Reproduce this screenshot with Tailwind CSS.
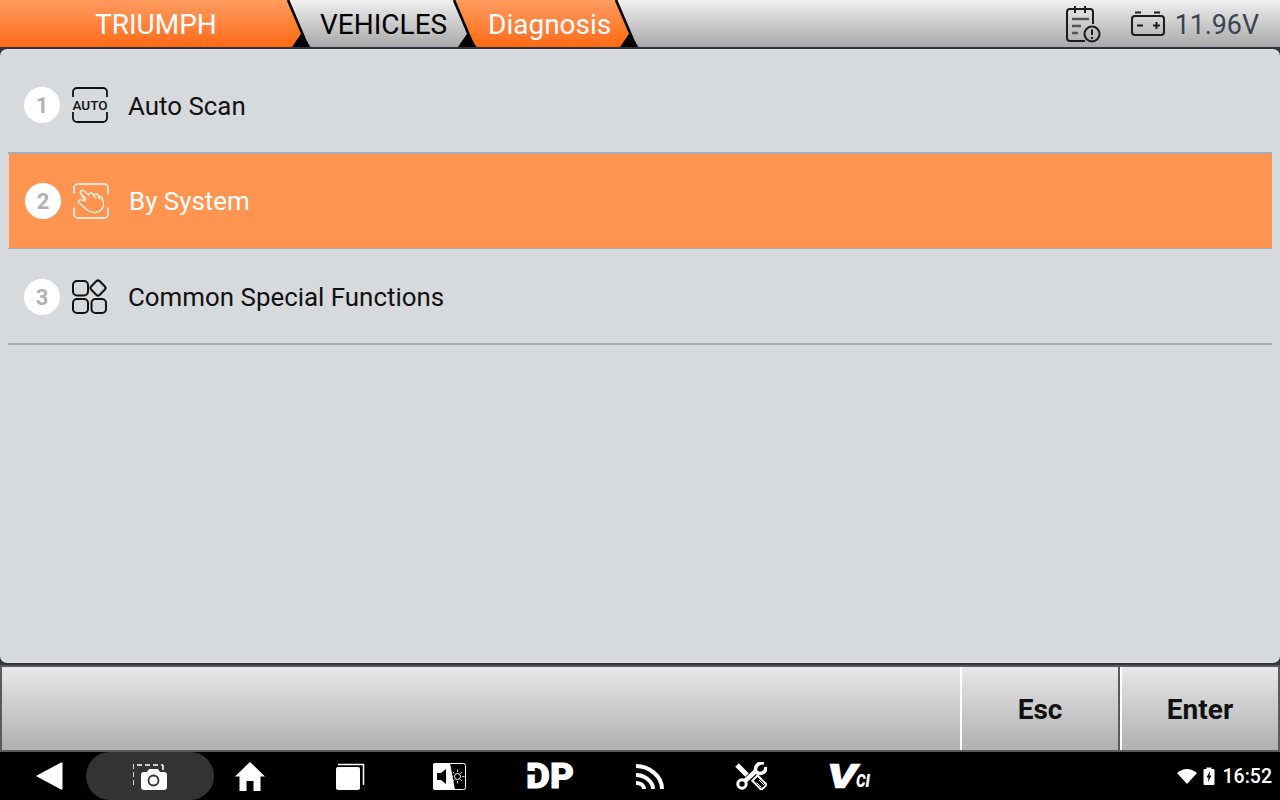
<!DOCTYPE html>
<html lang="en">
<head>
    <meta charset="UTF-8">
    <title>Diagnosis</title>
    <script src="https://cdn.jsdelivr.net/npm/@tailwindcss/browser@4"></script>
</head>
<body class="w-[1280px] h-[800px] overflow-hidden bg-[#2f3540] font-[Roboto,sans-serif]">

    <!-- Shared gradients for the breadcrumb separators -->
    <svg width="0" height="0" class="absolute">
        <defs>
            <linearGradient id="orangeGrad" x1="0" y1="0" x2="0" y2="1">
                <stop offset="0" stop-color="#ff9b5e"/>
                <stop offset="1" stop-color="#ff6a0c"/>
            </linearGradient>
        </defs>
    </svg>

    <!-- Top bar -->
    <header class="h-[47px] flex items-stretch bg-gradient-to-b from-[#f0f0f0] to-[#a9a9a9]">
        <div class="w-[287px] flex items-center pl-[95px] pt-[3px] bg-gradient-to-b from-[#ff9b5e] to-[#ff6a0c] text-white text-[28px]">TRIUMPH</div>
        <svg width="24" height="47" viewBox="0 0 24 47" class="shrink-0">
            <polygon points="0,0 1,0 15,33 6,47 0,47" fill="url(#orangeGrad)"/>
            <polygon points="14.5,33 23.5,47 5,47" fill="#000"/>
            <line x1="1" y1="0" x2="21" y2="47" stroke="#000" stroke-width="2.6"/>
        </svg>
        <div class="w-[142px] flex items-center pl-[9px] pt-[3px] text-black text-[28px]">VEHICLES</div>
        <svg width="24" height="47" viewBox="0 0 24 47" class="shrink-0">
            <polygon points="1,0 24,0 24,47 5,47 15,33" fill="url(#orangeGrad)"/>
            <polygon points="14.5,33 23.5,47 5,47" fill="#000"/>
            <line x1="1" y1="0" x2="21" y2="47" stroke="#000" stroke-width="2.6"/>
        </svg>
        <div class="w-[138px] flex items-center pl-[11px] pt-[3px] bg-gradient-to-b from-[#ff9b5e] to-[#ff6a0c] text-white text-[28px]">Diagnosis</div>
        <svg width="24" height="47" viewBox="0 0 24 47" class="shrink-0">
            <polygon points="0,0 1,0 15,33 6,47 0,47" fill="url(#orangeGrad)"/>
            <polygon points="14.5,33 23.5,47 5,47" fill="#000"/>
            <line x1="1" y1="0" x2="21" y2="47" stroke="#000" stroke-width="2.6"/>
        </svg>

        <div class="ml-auto flex items-center pr-[21px]">
            <!-- Maintenance calendar -->
            <svg width="36" height="38" viewBox="0 0 36 38" fill="none" stroke="#1c1c1c" stroke-width="2" class="mt-[1px]">
                <path d="M19 36H4a3 3 0 0 1-3-3V7a3 3 0 0 1 3-3h20a3 3 0 0 1 3 3v12"/>
                <path d="M9 1v7M19 1v7" />
                <path d="M6 14h17" stroke="#555" stroke-width="2.5"/>
                <path d="M6 21h9" stroke="#555" stroke-width="2.5"/>
                <path d="M6 28h6" stroke="#555" stroke-width="2.5"/>
                <circle cx="26" cy="29" r="7.5"/>
                <path d="M26 24.5v5.5M26 32v2"/>
            </svg>
            <!-- Battery -->
            <svg width="36" height="26" viewBox="0 0 36 26" fill="none" stroke="#1c1c1c" stroke-width="2" class="ml-[27px]">
                <rect x="3" y="5" width="32" height="19" rx="3"/>
                <path d="M6 1.500h6M25 1.500h6"/>
                <path d="M8 14.500h6M24 14.500h7M27.500 11v7"/>
            </svg>
            <span class="ml-[10px] pt-[3px] text-[26.8px] text-[#3b4250]">11.96V</span>
        </div>
    </header>

    <!-- Menu panel -->
    <main class="mt-[2px] h-[614px] rounded-[7px] bg-[#d7dadd] pt-[2px] px-[8px]">
        <div class="h-[103px] flex items-center pt-[7px] border-b-2 border-[#a9adb1]">
            <span class="ml-[16px] w-[36px] h-[36px] rounded-full bg-white flex items-center justify-center text-[22px] font-bold text-[#b2b2b2]">1</span>
            <svg width="38" height="38" viewBox="0 0 38 38" fill="none" stroke="#111" stroke-width="1.8" class="ml-[11px]">
                <path d="M2 11V6a4 4 0 0 1 4-4h26a4 4 0 0 1 4 4v5"/>
                <path d="M2 26v6a4 4 0 0 0 4 4h26a4 4 0 0 0 4-4v-6"/>
                <text x="1.500" y="23.500" font-family="Roboto" font-weight="500" font-size="12.5" fill="#111" stroke="none" textLength="35" lengthAdjust="spacingAndGlyphs">AUTO</text>
            </svg>
            <span class="ml-[19px] pt-[3px] text-[25.9px] text-[#111]">Auto Scan</span>
        </div>

        <div class="h-[94px] ml-[1px] flex items-center bg-[#ff9551]">
            <span class="ml-[16px] w-[36px] h-[36px] rounded-full bg-white flex items-center justify-center text-[22px] font-bold text-[#b2b2b2]">2</span>
            <svg width="38" height="38" viewBox="0 0 38 38" fill="none" stroke="#fff" stroke-width="1.5" stroke-linecap="round" stroke-linejoin="round" class="ml-[11px]">
                <path d="M2 11V6a4 4 0 0 1 4-4h26a4 4 0 0 1 4 4v5"/>
                <path d="M2 26v6a4 4 0 0 0 4 4h26a4 4 0 0 0 4-4v-6"/>
                <path stroke-width="1.200" d="M9 12c-2-2 0-5 3-3l5 4c0-2 2-3 4-1l1 2c0-2 2-3 4-1l1 2c1-1 3-1 3 1 2 4 2 9-1 12-3 3-8 3-12 1-4-2-6-6-10-8-2-1 0-4 3-3l3 1z"/>
                <path stroke-width="1.200" d="M14 17 9 12M21 12l3 4M26 14l2 3"/>
            </svg>
            <span class="ml-[19px] text-[25.9px] text-white">By System</span>
        </div>

        <div class="h-[97px] pt-[2px] flex items-center border-t border-b-2 border-[#a9adb1]">
            <span class="ml-[16px] w-[36px] h-[36px] rounded-full bg-white flex items-center justify-center text-[22px] font-bold text-[#b2b2b2]">3</span>
            <svg width="38" height="38" viewBox="0 0 38 38" fill="none" stroke="#111" stroke-width="2" class="ml-[11px]">
                <rect x="2" y="3" width="15" height="14.500" rx="4"/>
                <rect x="2" y="21" width="15" height="14" rx="4"/>
                <rect x="20.500" y="21" width="14.500" height="14" rx="4"/>
                <rect x="21" y="4" width="12" height="12" rx="2.500" transform="rotate(45 27 10)"/>
            </svg>
            <span class="ml-[19px] text-[25.9px] text-[#111]">Common Special Functions</span>
        </div>
    </main>

    <!-- Button bar -->
    <footer class="mt-[2px] h-[87px] flex border-2 border-[#5a5a5a] bg-gradient-to-b from-[#e8e8e8] to-[#b0b0b0]">
        <div class="w-[960px] border-r-2 border-white"></div>
        <div class="w-[158px] pt-[2px] flex items-center justify-center text-[28px] font-bold text-[#111] border-r-2 border-[#5a5a5a]">Esc</div>
        <div class="flex-1 pt-[2px] flex items-center justify-center text-[28px] font-bold text-[#111] border-l-2 border-white">Enter</div>
    </footer>

    <!-- Android nav bar -->
    <nav class="h-[48px] flex items-center bg-black text-white">
        <svg width="27" height="28" viewBox="0 0 27 28" class="ml-[36px]" fill="#fff">
            <path d="M0 14 25 0.5Q26.500 0 26.500 1.500V26.500Q26.500 28 25 27.500Z"/>
        </svg>
        <div class="ml-[23px] w-[128px] h-[48px] rounded-full bg-[#333] flex items-center justify-center">
            <svg width="34" height="26" viewBox="0 0 34 26" class="mt-[2px]">
                <path d="M0 21V1h30" fill="none" stroke="#fff" stroke-width="1.6" stroke-dasharray="5 3"/>
                <path d="M30 1v5" fill="none" stroke="#fff" stroke-width="1.6"/>
                <path d="M10 8h4l2-3h9l2 3h4a3 3 0 0 1 3 3v12a3 3 0 0 1-3 3H11a3 3 0 0 1-3-3V11a3 3 0 0 1 2-3z" fill="#fff"/>
                <circle cx="20.500" cy="16.500" r="5" fill="none" stroke="#333" stroke-width="1.800"/>
            </svg>
        </div>
        <svg width="30" height="29" viewBox="0 0 30 29" class="ml-[21px]" fill="#fff">
            <path d="M15 0 30 14.500H25.500V29H18.500V19H11.500V29H4.500V14.500H0Z"/>
        </svg>
        <svg width="30" height="27" viewBox="0 0 30 27" class="ml-[70px]">
            <path d="M3 1.500H28.500V22" fill="none" stroke="#fff" stroke-width="1.500"/>
            <rect x="1" y="4" width="24" height="23" rx="2" fill="#fff"/>
        </svg>
        <svg width="34" height="27" viewBox="0 0 34 27" class="ml-[68px]">
            <rect x="0.500" y="0.500" width="32" height="26" rx="2" fill="#000" stroke="#fff"/>
            <path d="M2 0H17L22 27H2Q0 27 0 25V2Q0 0 2 0Z" fill="#fff"/>
            <path d="M4 10H8L13 6V21L8 17H4Z" fill="#000"/>
            <circle cx="24.500" cy="13.500" r="3" fill="none" stroke="#fff"/>
            <path d="M24.500 6.500v2.500M24.500 18v2.500M18 13.500h2M29 13.500h2.500M20 9l1.500 1.500M29 9l-1.500 1.500M20 18l1.500-1.500M29 18l-1.500-1.500" stroke="#fff" stroke-width="0.800"/>
        </svg>
        <svg width="48" height="30" viewBox="0 0 48 30" class="ml-[59px] overflow-visible">
            <text x="0" y="27" font-family="Roboto" font-weight="900" font-size="35" fill="#fff" stroke="#fff" stroke-width="0.800" textLength="48" lengthAdjust="spacingAndGlyphs">DP</text>
            <rect x="-1" y="10" width="10" height="3.500" fill="#000"/>
        </svg>
        <svg width="30" height="27" viewBox="0 0 30 27" class="ml-[61px]" fill="none" stroke="#fff" stroke-width="4">
            <path d="M1 3C14 3 27 13 27 26"/>
            <path d="M1 12C9 12 18 18 18 26"/>
            <path d="M1 20C5 20 9 22 9 26"/>
        </svg>
        <svg width="32" height="28" viewBox="0 0 32 28" class="ml-[70px]" fill="none" stroke="#fff">
            <path d="M2 3 12 13" stroke-width="5"/>
            <path d="M10 19 22 8" stroke-width="4.500"/>
            <path d="M29 1C23 0 19 5 21 10 25 13 31 11 31 5" stroke-width="3.500"/>
            <circle cx="7" cy="22" r="4.200" stroke-width="3"/>
            <rect x="18" y="17" width="13" height="7.500" transform="rotate(45 24.500 20.750)" stroke-width="2"/>
            <path d="M21.500 20.500l5 5M24 18l5 5" stroke-width="1"/>
        </svg>
        <svg width="42" height="28" viewBox="0 0 42 28" class="ml-[62px] overflow-visible" fill="#fff">
            <text x="-2" y="26" font-family="Roboto" font-style="italic" font-weight="900" font-size="34" stroke="#fff" stroke-width="0.600" textLength="30" lengthAdjust="spacingAndGlyphs">V</text>
            <text x="27" y="25" font-family="Roboto" font-style="italic" font-weight="900" font-size="18" textLength="14" lengthAdjust="spacingAndGlyphs">CI</text>
        </svg>

        <div class="ml-auto flex items-center pr-[8px]">
            <svg width="20" height="15" viewBox="0 0 20 15" fill="#fff"><path d="M0 4Q10-4 20 4L10 15Z"/></svg>
            <svg width="12" height="18" viewBox="0 0 11 18" class="ml-[6px]">
                <path d="M3 2V0.500H8V2H10Q11 2 11 3V17Q11 18 10 18H1Q0 18 0 17V3Q0 2 1 2Z" fill="#fff"/>
                <path d="M6.500 4 3 10.500H5L4.500 15 8 8.500H6Z" fill="#000"/>
            </svg>
            <span class="ml-[8px] pt-[1px] text-[19.5px] font-medium text-white">16:52</span>
        </div>
    </nav>
</body>
</html>
